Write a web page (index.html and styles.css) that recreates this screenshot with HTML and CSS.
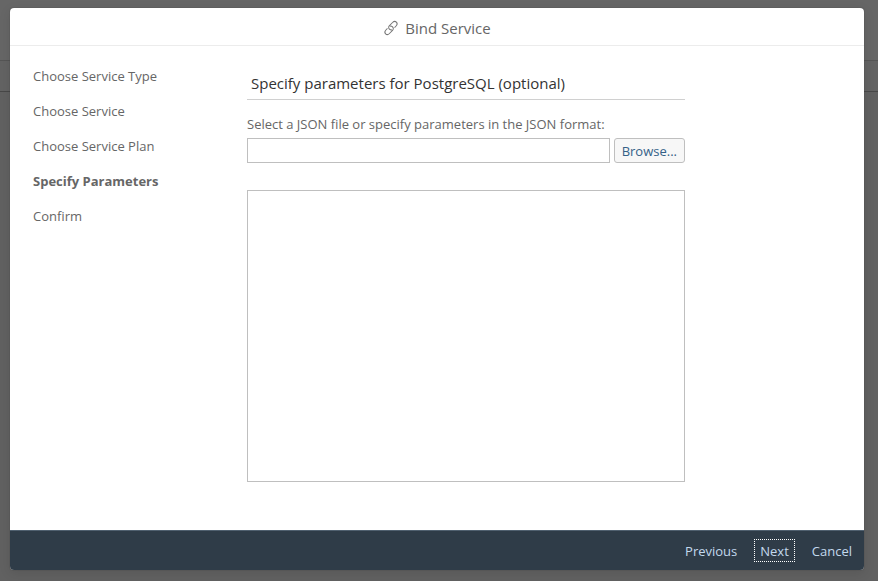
FILE: index.html
```html
<!DOCTYPE html>
<html lang="en">
<head>
<meta charset="utf-8">
<title>Bind Service</title>
<link rel="stylesheet" href="styles.css">
</head>
<body>
<div class="shell" aria-hidden="true"><div class="shell-bar"></div><div class="shell-row"></div></div>
<div class="dialog" role="dialog" aria-labelledby="dialog-title">
  <header class="dialog-header">
    <svg class="link-icon" viewBox="0 0 16 16" aria-hidden="true">
      <g transform="rotate(-45 8 8)">
        <path d="M7.6 10C6 9.4 5.6 7.4 6.6 6.1Q7.4 5.2 8.6 5.2H13Q15.9 5.2 15.9 7.7T13 10.2H10.8"/>
        <path d="M8.4 6C10 6.6 10.4 8.6 9.4 9.9Q8.6 10.8 7.4 10.8H3Q.1 10.8 .1 8.3T3 5.8H5.2"/>
      </g>
    </svg>
    <h1 class="dialog-title" id="dialog-title">Bind Service</h1>
  </header>
  <main class="dialog-body">
    <ol class="steps">
      <li>Choose Service Type</li>
      <li>Choose Service</li>
      <li>Choose Service Plan</li>
      <li class="current" aria-current="step">Specify Parameters</li>
      <li>Confirm</li>
    </ol>
    <form class="content">
      <h2 class="section-title">Specify parameters for PostgreSQL (optional)</h2>
      <label class="label" for="file">Select a JSON file or specify parameters in the JSON format:</label>
      <div class="file-row">
        <input class="field" id="file" type="text">
        <button class="browse" type="button">Browse...</button>
      </div>
      <textarea class="field params" aria-label="Parameters"></textarea>
    </form>
  </main>
  <footer class="dialog-footer">
    <button class="action" type="button">Previous</button>
    <button class="action focused" type="button">Next</button>
    <button class="action" type="button">Cancel</button>
  </footer>
</div>
</body>
</html>
```
FILE: styles.css
```css
* {
  box-sizing: border-box;
}

body {
  display: grid;
  height: 100vh;
  margin: 0;
  background: #616161;
  color: #666;
  font: 13px/18px "Open Sans", "Noto Sans", sans-serif;
}

.shell,
.dialog {
  grid-area: 1 / 1;
}

.shell-bar {
  height: 61px;
  background: #666;
  border-bottom: 1px solid #555;
}

.shell-row {
  height: 31px;
  background: #636363;
  border-bottom: 1px solid #484848;
}

.dialog {
  display: flex;
  flex-direction: column;
  margin: 8px 14px 11px 10px;
  overflow: hidden;
  background: #fff;
  border-radius: 4px;
  box-shadow: 0 0 1px #333, 0 3px 12px rgba(0, 0, 0, .1);
  z-index: 1;
}

.dialog-header {
  display: flex;
  align-items: center;
  justify-content: center;
  gap: 6px;
  height: 38px;
  padding-top: 2px;
  border-bottom: 1px solid #ececec;
}

.link-icon {
  width: 16px;
  height: 16px;
  overflow: visible;
  fill: none;
  stroke: #777;
  stroke-width: 1;
}

.dialog-title {
  margin: 0;
  font-size: 15px;
  font-weight: 400;
}

.dialog-body {
  display: flex;
  flex: 1;
  padding: 21px 23px 48px;
}

.steps {
  display: flex;
  flex: 0 0 214px;
  flex-direction: column;
  gap: 17px;
  margin: 0;
  padding: 0;
  list-style: none;
}

.current {
  font-weight: 700;
}

.content {
  display: flex;
  flex: 1;
  flex-direction: column;
  max-width: 438px;
}

.section-title {
  margin: 0 0 15px;
  padding: 6px 4px;
  border-bottom: 1px solid #d0d0d0;
  color: #333;
  font-size: 15px;
  font-weight: 400;
  line-height: 20px;
}

.label {
  margin-bottom: 5px;
}

.file-row {
  display: flex;
  gap: 4px;
  margin-bottom: 27px;
}

.field {
  min-width: 0;
  height: 25px;
  padding: 2px 6px;
  background: #fff;
  border: 1px solid #bfbfbf;
  border-radius: 0;
  color: #333;
  font: inherit;
}

.file-row .field {
  flex: 1;
}

.browse {
  height: 25px;
  padding: 0 7px;
  background: #f7f7f7;
  border: 1px solid #bfbfbf;
  border-radius: 3px;
  color: #346187;
  font: inherit;
}

.params {
  flex: 1;
  resize: none;
}

.dialog-footer {
  display: flex;
  align-items: center;
  justify-content: flex-end;
  gap: 11px;
  height: 40px;
  padding: 0 6px;
  background: #2f3c48;
  border-top: 1px solid #50606f;
}

.action {
  height: 23px;
  padding: 0 5px;
  background: none;
  border: 1px solid transparent;
  color: #c3d9ed;
  font: inherit;
}

.focused {
  border: 1px dotted #fff;
}
```
